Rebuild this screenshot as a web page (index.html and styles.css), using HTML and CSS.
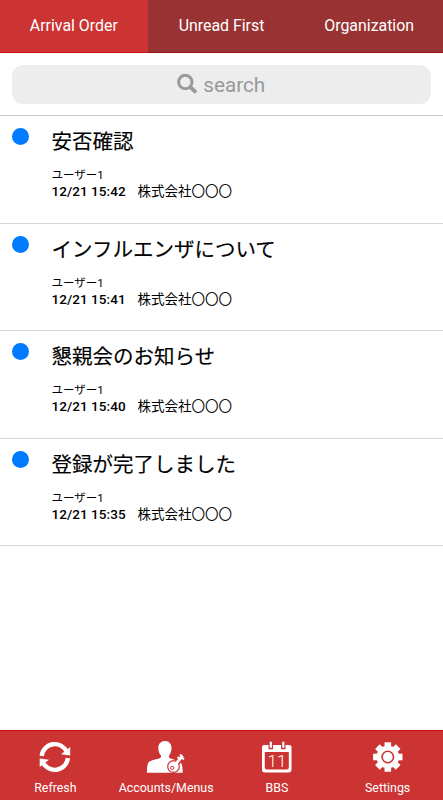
FILE: index.html
```
<!DOCTYPE html>
<html lang="ja">
<head>
<meta charset="utf-8">
<title>Messages</title>
<link rel="stylesheet" href="styles.css">
</head>
<body>
<nav class="tabs">
  <div class="tab active">Arrival Order</div>
  <div class="tab">Unread First</div>
  <div class="tab">Organization</div>
</nav>
<div class="search-bar">
  <div class="search">
    <svg class="search-icon" viewBox="0 0 20 20"><circle cx="8.300" cy="8" r="6.700" fill="none" stroke="#999" stroke-width="3"/><path d="M12.800 12.600L19 18.400" stroke="#999" stroke-width="3.800"/></svg>
    <span class="search-text">search</span>
  </div>
</div>
<main class="list">
  <article class="row"><span class="dot"></span><div class="content"><h2 class="title">安否確認</h2><div class="user">ユーザー1</div><div class="meta"><span class="date">12/21 15:42</span><span class="company">株式会社〇〇〇</span></div></div></article>
  <article class="row"><span class="dot"></span><div class="content"><h2 class="title">インフルエンザについて</h2><div class="user">ユーザー1</div><div class="meta"><span class="date">12/21 15:41</span><span class="company">株式会社〇〇〇</span></div></div></article>
  <article class="row"><span class="dot"></span><div class="content"><h2 class="title">懇親会のお知らせ</h2><div class="user">ユーザー1</div><div class="meta"><span class="date">12/21 15:40</span><span class="company">株式会社〇〇〇</span></div></div></article>
  <article class="row"><span class="dot"></span><div class="content"><h2 class="title">登録が完了しました</h2><div class="user">ユーザー1</div><div class="meta"><span class="date">12/21 15:35</span><span class="company">株式会社〇〇〇</span></div></div></article>
</main>
<footer class="bottom">
  <div class="item">
    <svg class="icon" viewBox="0 0 36 36"><g fill="none" stroke="#fff" stroke-width="4.400"><path d="M4.700 17A13.200 13.200 0 0 1 30 13.200"/><path d="M30.900 19A13.200 13.200 0 0 1 5.600 22.800"/></g><path fill="#fff" d="M33.200 8v8.500L24 15.200zM2.700 28v-8.500L12 20.800z"/></svg>
    <span class="label">Refresh</span>
  </div>
  <div class="item">
    <svg class="icon wide" viewBox="0 0 40 36"><path fill="#fff" d="M19 2c4.300 0 6.500 3 6.500 7 0 3.500-1.200 6-2.500 7.500v2c1 1.500 8 2.600 11 4.500 2 1.300 2.700 4 2.700 10.700H1c0-6.500.3-9.700 2.500-11.200C6.500 20.600 14 20 15 18.200v-1.700C13.500 15 12.300 12.500 12.300 9c0-4 2.400-7 6.700-7z"/><path stroke="#c33" stroke-width="5.500" d="M31 24L37 17"/><circle cx="27.500" cy="27.500" r="5.800" fill="#fff" stroke="#c33" stroke-width="1.200"/><circle cx="26.300" cy="28.900" r="1.600" fill="none" stroke="#c33" stroke-width="1"/><path fill="none" stroke="#fff" stroke-width="3" d="M30 25L36.500 16.700"/><path fill="none" stroke="#fff" stroke-width="2" d="M34 20l-2.500-2M34.500 18.500l3.700 1.500M36 17l-2-1.500"/></svg>
    <span class="label">Accounts/Menus</span>
  </div>
  <div class="item">
    <svg class="icon" viewBox="0 0 36 36"><path fill="#fff" fill-rule="evenodd" d="M5 6h25.500a2 2 0 0 1 2 2v22.500a3 3 0 0 1-3 3H6a3 3 0 0 1-3-3V8a2 2 0 0 1 2-2zM5.800 13v15.500a2 2 0 0 0 2 2h20a2 2 0 0 0 2-2V13z"/><path stroke="#c33" stroke-width="4.500" d="M11.800 2v8.300M24.300 2v8.300"/><path stroke="#fff" stroke-width="2.200" d="M11.800 2.700v6M24.300 2.700v6"/><text class="day" x="18" y="28">11</text></svg>
    <span class="label">BBS</span>
  </div>
  <div class="item">
    <svg class="icon" viewBox="0 0 36 36"><g fill="#fff"><circle cx="17.800" cy="18" r="11.300"/><g id="teeth"><path d="M14.500 3.300h6.600v29.400h-6.600z"/><path d="M3.100 14.700h29.400v6.600H3.100z"/></g><use href="#teeth" transform="rotate(45 17.800 18)"/></g><circle cx="17.800" cy="18" r="5.700" fill="none" stroke="#c33" stroke-width="1.600"/></svg>
    <span class="label">Settings</span>
  </div>
</footer>
</body>
</html>
```
FILE: styles.css
```
* { box-sizing: border-box; }
body {
  margin: 0;
  height: 800px;
  display: flex;
  flex-direction: column;
  background: #fff;
  color: #000;
  font-family: Roboto, "Noto Sans CJK JP", sans-serif;
  overflow: hidden;
}
.tabs {
  display: flex;
  height: 53px;
  flex: none;
  background: #993333;
  color: #fff;
}
.tab {
  flex: 1;
  height: 53px;
  border-bottom: 1px solid #990f10;
  font-size: 15.9px;
  line-height: 52px;
  text-align: center;
}
.tab.active { background: #cc3333; border-color: #cc0f10; }
.search-bar {
  flex: none;
  height: 63px;
  padding: 12px 12px 0 11.5px;
  border-bottom: 1px solid #c8c8c8;
}
.search {
  display: flex;
  align-items: center;
  justify-content: center;
  gap: 6px;
  height: 38.5px;
  border-radius: 11px;
  background: #ededed;
  color: #999;
}
.search-icon { width: 20px; height: 20px; }
.search-text { font-size: 20.7px; line-height: 38px; padding-top: 1px; }
.list { flex: 1; }
.row {
  display: flex;
  height: 107.5px;
  padding: 12px 0 0 11.5px;
  border-bottom: 1px solid #d6d6d6;
}
.dot {
  width: 17px;
  height: 17px;
  border-radius: 50%;
  background: #007aff;
}
.content { margin-left: 23px; white-space: nowrap; }
.title {
  margin: 0;
  font-size: 20.5px;
  font-weight: 400;
  -webkit-text-stroke: .15px #000;
  line-height: 28px;
}
.user { margin-top: 11px; font-size: 11.5px; line-height: 16px; }
.meta { display: flex; font-size: 13.5px; line-height: 17px; }
.date { width: 86px; font-weight: 500; letter-spacing: .05px; }
.bottom {
  display: flex;
  flex: none;
  height: 70px;
  border-top: 1px solid #cc0f10;
  background: #cc3333;
  color: #fff;
}
.item {
  flex: 1;
  display: flex;
  flex-direction: column;
  align-items: center;
  padding-top: 8px;
}
.icon { width: 36px; height: 36px; }
.icon.wide { width: 40px; }
.label { margin-top: 5px; font-size: 12.4px; line-height: 16px; }
.day { font-family: Roboto, sans-serif; font-size: 17px; font-weight: 300; fill: #fff; text-anchor: middle; }
```
